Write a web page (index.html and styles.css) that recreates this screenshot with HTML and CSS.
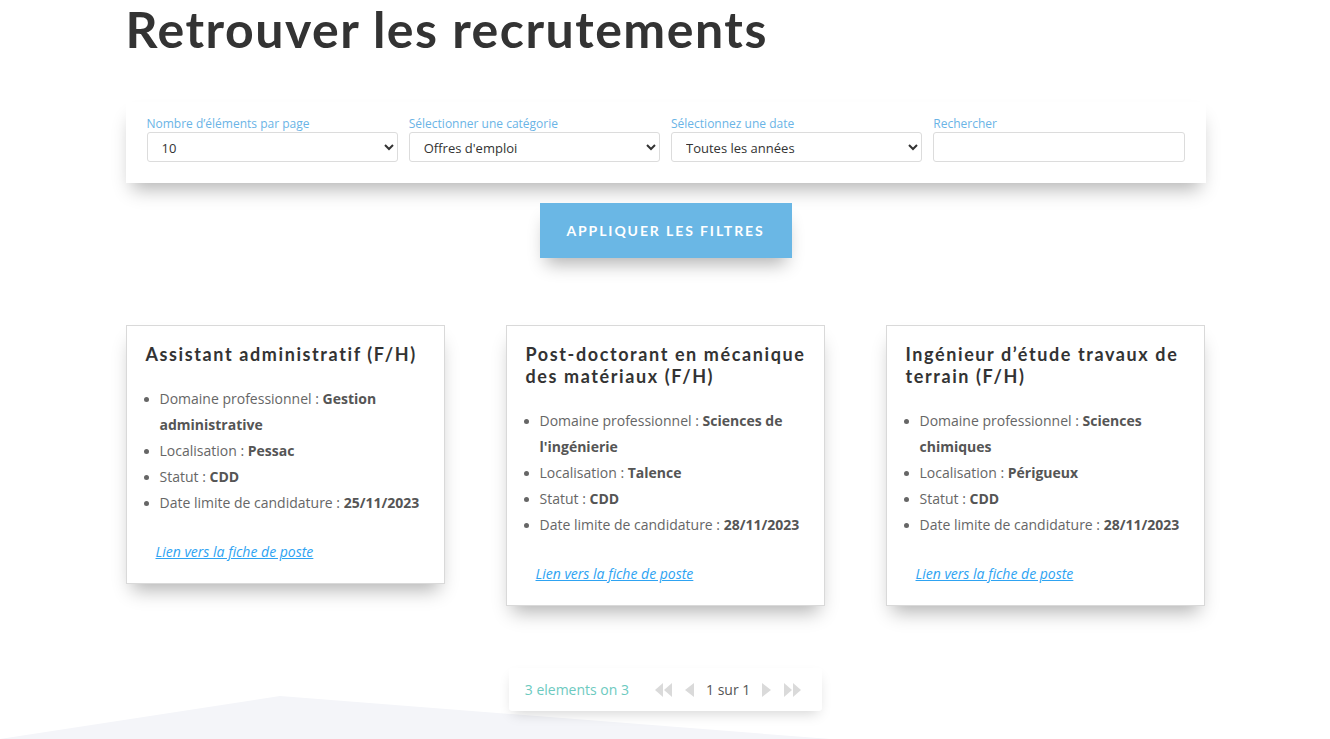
FILE: index.html
```html
<!DOCTYPE html>
<html lang="fr">
<head>
<meta charset="utf-8">
<title>Retrouver les recrutements</title>
<link rel="stylesheet" href="styles.css">
</head>
<body>
<div class="bg-shape"></div>
<main class="container">
  <h1 class="page-title">Retrouver les recrutements</h1>

  <form class="filters">
    <label class="field">
      <span class="field-label">Nombre d’éléments par page</span>
      <select class="control"><option>10</option></select>
    </label>
    <label class="field">
      <span class="field-label">Sélectionner une catégorie</span>
      <select class="control"><option>Offres d'emploi</option></select>
    </label>
    <label class="field">
      <span class="field-label">Sélectionnez une date</span>
      <select class="control"><option>Toutes les années</option></select>
    </label>
    <label class="field">
      <span class="field-label">Rechercher</span>
      <input class="control input" type="text">
    </label>
  </form>

  <div class="apply-row">
    <button class="apply-btn" type="button">Appliquer les filtres</button>
  </div>

  <section class="cards">
    <article class="card">
      <h2 class="card-title">Assistant administratif (F/H)</h2>
      <ul class="card-list">
        <li>Domaine professionnel : <strong>Gestion administrative</strong></li>
        <li>Localisation : <strong>Pessac</strong></li>
        <li>Statut : <strong>CDD</strong></li>
        <li>Date limite de candidature : <strong>25/11/2023</strong></li>
      </ul>
      <p class="card-link"><a href="#">Lien vers la fiche de poste</a></p>
    </article>
    <article class="card">
      <h2 class="card-title">Post-doctorant en mécanique<br>des matériaux (F/H)</h2>
      <ul class="card-list">
        <li>Domaine professionnel : <strong>Sciences de l'ingénierie</strong></li>
        <li>Localisation : <strong>Talence</strong></li>
        <li>Statut : <strong>CDD</strong></li>
        <li>Date limite de candidature : <strong>28/11/2023</strong></li>
      </ul>
      <p class="card-link"><a href="#">Lien vers la fiche de poste</a></p>
    </article>
    <article class="card">
      <h2 class="card-title">Ingénieur d’étude travaux de<br>terrain (F/H)</h2>
      <ul class="card-list">
        <li>Domaine professionnel : <strong>Sciences chimiques</strong></li>
        <li>Localisation : <strong>Périgueux</strong></li>
        <li>Statut : <strong>CDD</strong></li>
        <li>Date limite de candidature : <strong>28/11/2023</strong></li>
      </ul>
      <p class="card-link"><a href="#">Lien vers la fiche de poste</a></p>
    </article>
  </section>

  <div class="pager-row">
    <nav class="pager">
      <span class="pager-count">3 elements on 3</span>
      <span class="pager-controls">
        <svg class="pg-icon" viewBox="0 0 20 14" width="20" height="14"><polygon points="9,0 9,14 1,7"/><polygon points="18,0 18,14 10,7"/></svg>
        <svg class="pg-icon" viewBox="0 0 11 14" width="11" height="14"><polygon points="10,0 10,14 1,7"/></svg>
        <span class="pager-page">1 sur 1</span>
        <svg class="pg-icon" viewBox="0 0 11 14" width="11" height="14"><polygon points="1,0 1,14 10,7"/></svg>
        <svg class="pg-icon" viewBox="0 0 20 14" width="20" height="14"><polygon points="2,0 2,14 10,7"/><polygon points="11,0 11,14 19,7"/></svg>
      </span>
    </nav>
  </div>
</main>
</body>
</html>
```

FILE: styles.css
```css
html, body {
  margin: 0;
  padding: 0;
  background: #fff;
}
body {
  font-family: "Open Sans", "Liberation Sans", sans-serif;
  font-size: 14px;
  color: #666;
  position: relative;
  height: 739px;
  overflow: hidden;
}
.bg-shape {
  position: absolute;
  left: 0;
  top: 696px;
  width: 1330px;
  height: 90px;
  background: #f4f5f9;
  clip-path: polygon(0 43px, 280px 0, 1330px 82px, 1330px 90px, 0 90px);
  z-index: 0;
}
.container {
  position: relative;
  z-index: 1;
  width: 1080px;
  margin: 0 auto;
  padding-left: 1px;
}
.page-title {
  margin: 0;
  font-family: "Lato", "Liberation Sans", sans-serif;
  font-weight: 700;
  font-size: 50px;
  line-height: 58px;
  letter-spacing: 1.5px;
  color: #333;
  height: 102px;
}
.filters {
  background: #fff;
  box-shadow: 0 12px 18px -6px rgba(0,0,0,0.3);
  padding: 14px 21px 21px;
  display: grid;
  grid-template-columns: repeat(4, 1fr);
  column-gap: 11px;
}
.field {
  display: flex;
  flex-direction: column;
}
.field-label {
  font-size: 12px;
  line-height: 16px;
  color: #6ab4e6;
}
.control {
  height: 30px;
  box-sizing: border-box;
  border: 1px solid #dcdcdc;
  border-radius: 3px;
  background: #fff;
  font-family: "Open Sans", "Liberation Sans", sans-serif;
  font-size: 13px;
  color: #333;
  padding: 1px 8px 0 10px;
  width: 100%;
}
.input {
  padding: 0 10px;
}
.apply-row {
  display: flex;
  justify-content: center;
  padding-top: 20px;
}
.apply-btn {
  width: 252px;
  height: 55px;
  border: 0;
  background: #6ab7e5;
  color: #fff;
  font-family: "Lato", "Liberation Sans", sans-serif;
  font-weight: 700;
  font-size: 14px;
  letter-spacing: 1.9px;
  text-transform: uppercase;
  box-shadow: 0 12px 18px -6px rgba(0,0,0,0.3);
  cursor: pointer;
}
.cards {
  margin-top: 67px;
  display: grid;
  grid-template-columns: repeat(3, 319px);
  column-gap: 61px;
  align-items: start;
}
.card {
  background: #fff;
  border: 1px solid #d9d9d9;
  box-shadow: 0 12px 18px -6px rgba(0,0,0,0.3);
  padding: 17px 19px 18px;
}
.card-title {
  margin: 0;
  font-family: "Lato", "Liberation Sans", sans-serif;
  font-weight: 700;
  font-size: 18px;
  line-height: 22px;
  letter-spacing: 1.6px;
  white-space: nowrap;
  color: #333;
}
.card-list {
  margin: 21px 0 0;
  padding: 0 0 0 14px;
  line-height: 26px;
  color: #666;
}
.card-list li::marker {
  font-size: 13px;
}
.card-list strong {
  font-weight: 700;
  color: #555;
}
.card-link {
  margin: 23px 0 0;
  padding-left: 10px;
  line-height: 26px;
}
.card-link a {
  color: #2ea3f2;
  font-style: italic;
  text-decoration: underline;
}
.pager-row {
  display: flex;
  justify-content: center;
  margin-top: 62px;
}
.pager {
  background: #fff;
  box-shadow: 0 6px 14px -4px rgba(0,0,0,0.18);
  border-radius: 3px;
  height: 43px;
  box-sizing: border-box;
  padding: 0 20px 0 16px;
  display: flex;
  align-items: center;
  gap: 25px;
  white-space: nowrap;
}
.pager-count {
  color: #6dcabf;
  font-size: 14px;
}
.pager-controls {
  display: flex;
  align-items: center;
  gap: 10px;
}
.pg-icon {
  fill: #dadada;
  display: block;
}
.pager-page {
  color: #555;
  font-size: 14px;
  padding: 0 1px;
}
```
